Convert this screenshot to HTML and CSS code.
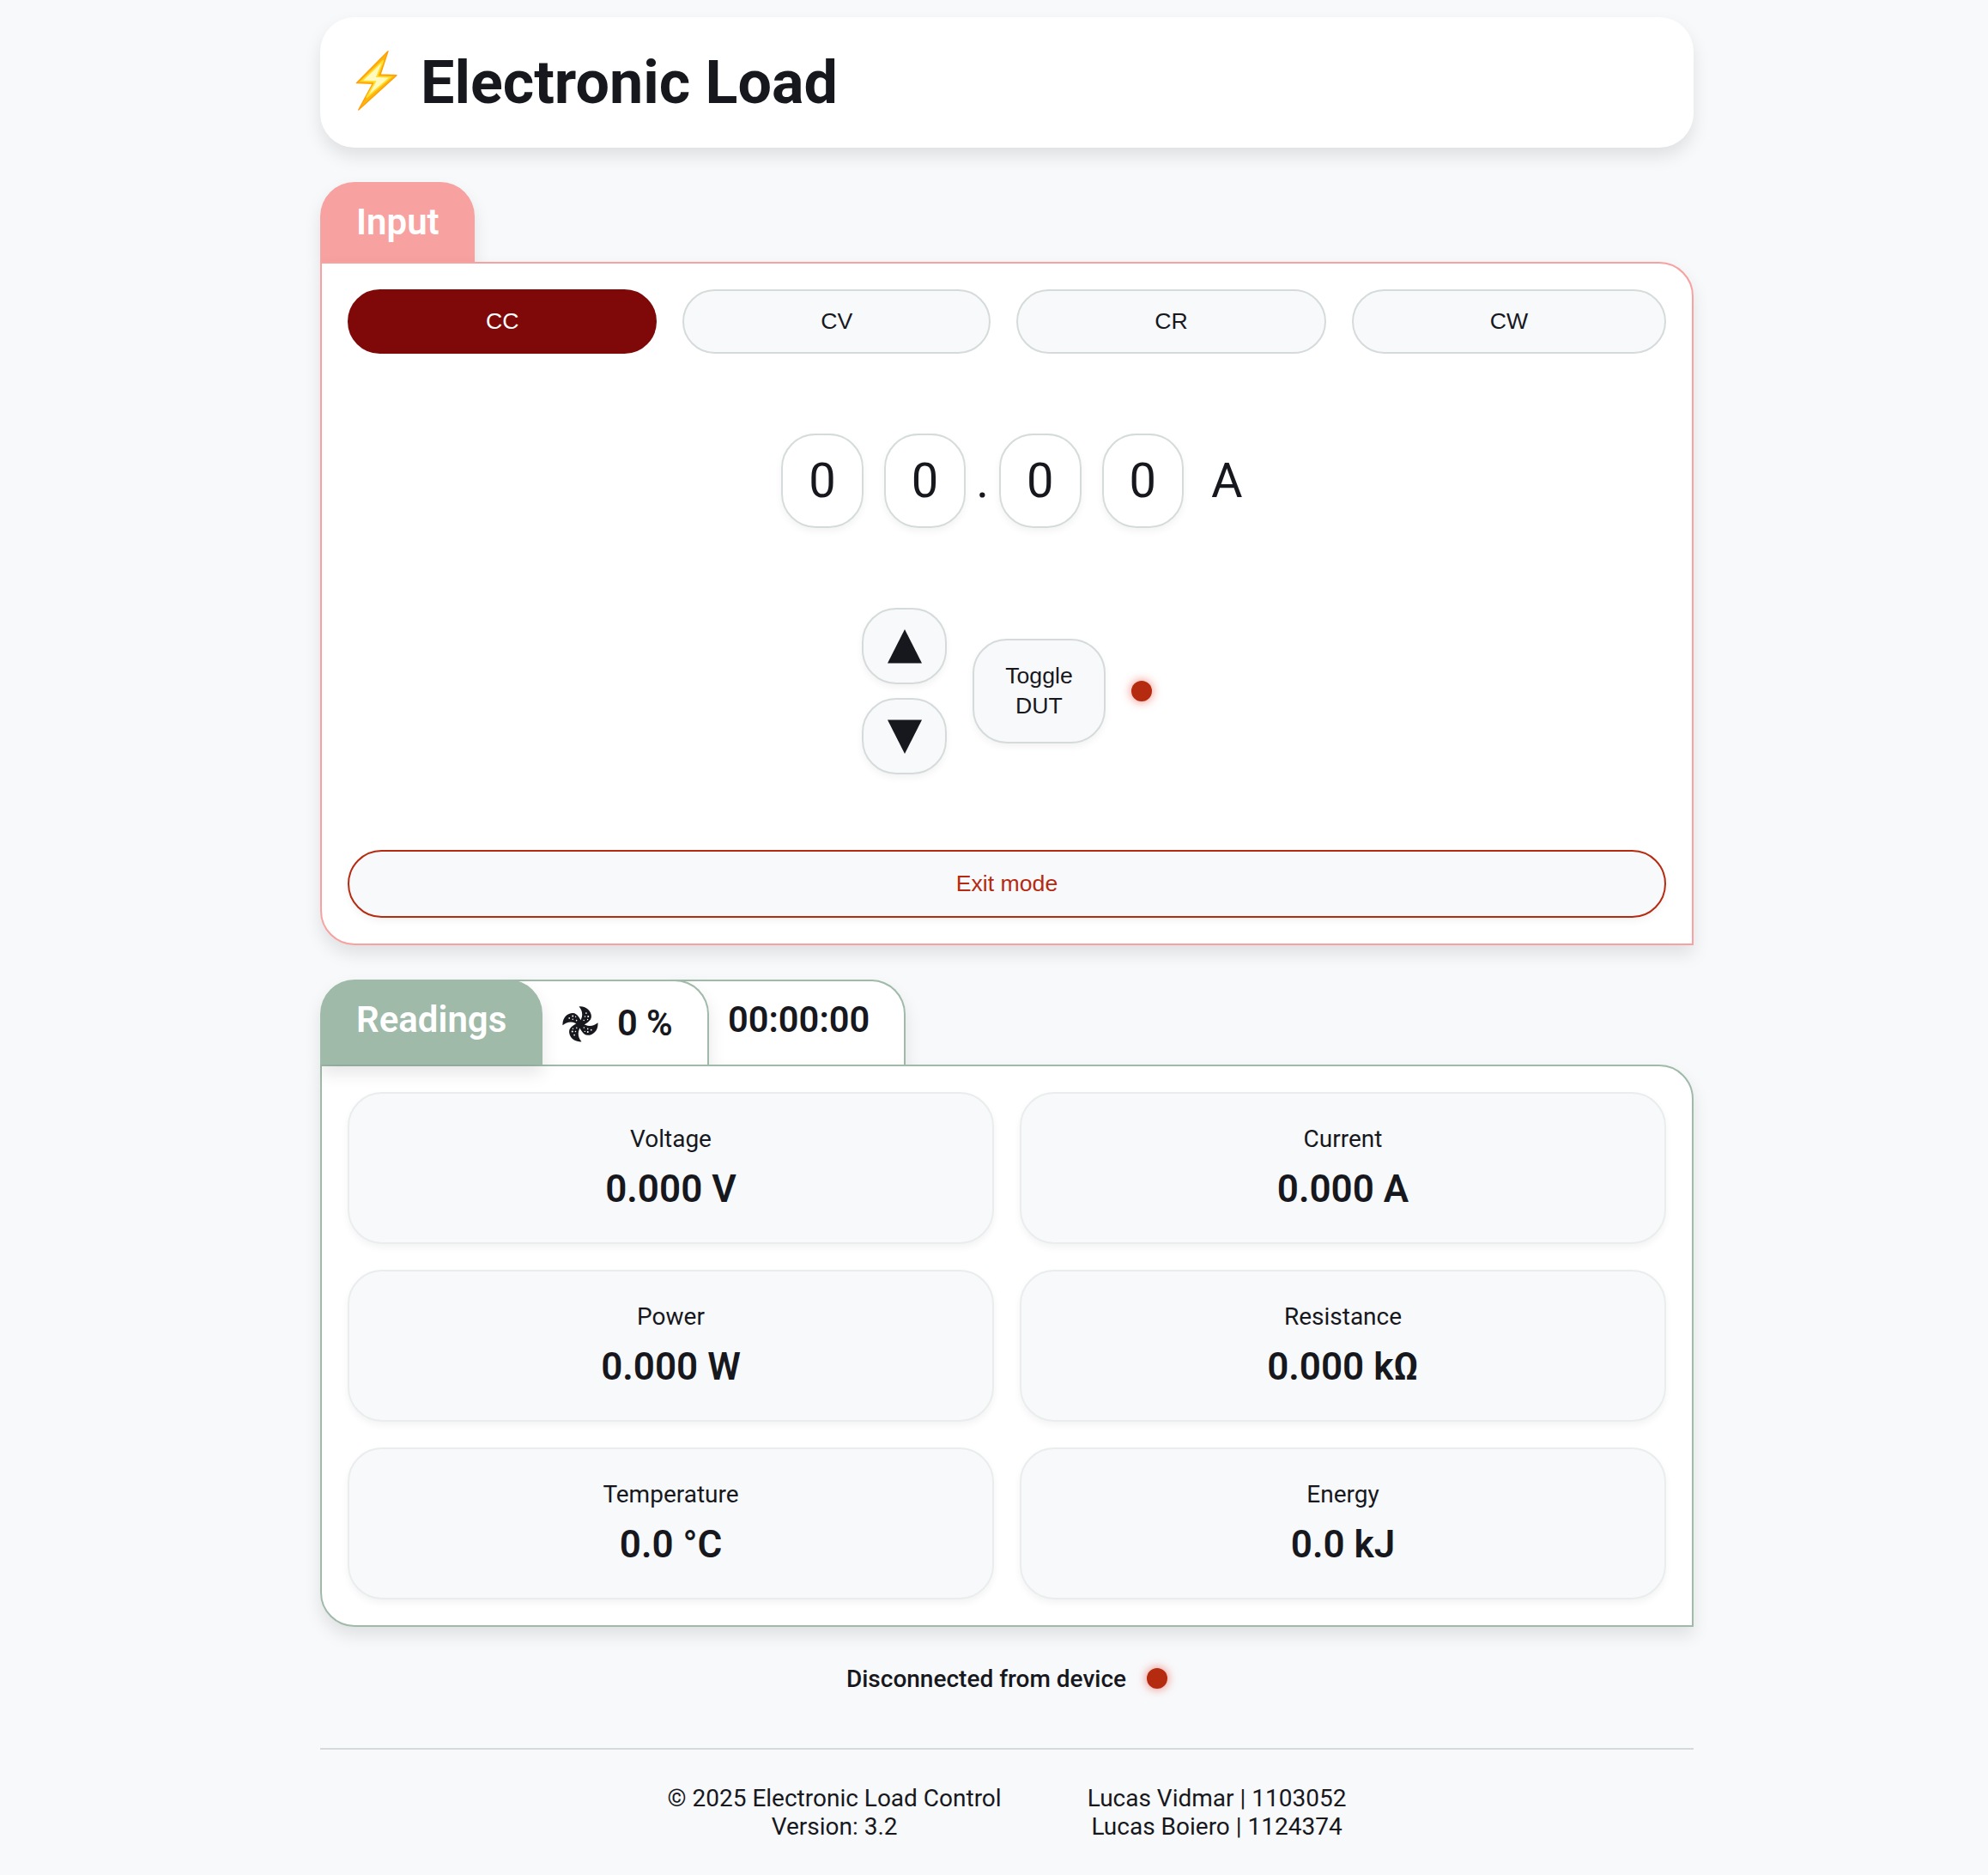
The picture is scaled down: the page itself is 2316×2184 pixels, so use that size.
FILE: index.html
```html
<!DOCTYPE html>
<html lang="en">
<head>
<meta charset="utf-8">
<title>Electronic Load</title>
<link rel="stylesheet" href="styles.css">
</head>
<body>
<div class="container">
  <header class="header">
    <svg class="bolt" viewBox="0 0 150 215" aria-hidden="true">
      <path d="M117-1 7 110 64 112 14 204 147 83 90 81Z" fill="#ffb60c" stroke="#ff9f05" stroke-width="4" stroke-linejoin="round"/>
      <path d="M101 31 25 103 73 105 42 161 126 90 78 88Z" fill="#fffac0" stroke="#ffe02e" stroke-width="5"/>
    </svg>
    <h1>Electronic Load</h1>
  </header>

  <section class="section input-section">
    <div class="tabs"><h2 class="tab tab-title">Input</h2></div>
    <div class="panel">
      <div class="modes">
        <button class="mode active">CC</button>
        <button class="mode">CV</button>
        <button class="mode">CR</button>
        <button class="mode">CW</button>
      </div>
      <div class="digits">
        <span class="digit">0</span><span class="digit">0</span><span class="point">.</span><span class="digit">0</span><span class="digit">0</span><span class="unit">A</span>
      </div>
      <div class="controls">
        <div class="arrows">
          <button class="arrow" aria-label="Increase"><svg viewBox="0 0 40 40"><path d="M20 0 40 39.5H0Z"/></svg></button>
          <button class="arrow" aria-label="Decrease"><svg viewBox="0 0 40 40"><path d="M0 .5H40L20 40Z"/></svg></button>
        </div>
        <button class="toggle">Toggle<br>DUT</button>
        <span class="led"></span>
      </div>
      <button class="exit">Exit mode</button>
    </div>
  </section>

  <section class="section readings-section">
    <div class="tabs">
      <h2 class="tab tab-title">Readings</h2>
      <div class="tab tab-fan">
        <svg class="fan" viewBox="0 0 125 125" aria-hidden="true">
          <defs>
            <g id="blade">
              <path d="M58 1C84-1 101 17 101 36 100 53 84 58 66 71L54 60C74 42 73 18 58 1Z"/>
              <g class="holes"><circle cx="83" cy="24" r="2.6"/><circle cx="79" cy="36" r="2.3"/><circle cx="90" cy="36" r="3"/><circle cx="75" cy="49" r="2.3"/><circle cx="88" cy="46" r="2"/></g>
            </g>
          </defs>
          <use href="#blade"/>
          <use href="#blade" transform="rotate(90 62.5 62)"/>
          <use href="#blade" transform="rotate(180 62.5 62)"/>
          <use href="#blade" transform="rotate(270 62.5 62)"/>
        </svg>
        <span>0 %</span>
      </div>
      <div class="tab tab-time">00:00:00</div>
    </div>
    <div class="panel readings">
      <div class="card"><span class="label">Voltage</span><span class="value">0.000 V</span></div>
      <div class="card"><span class="label">Current</span><span class="value">0.000 A</span></div>
      <div class="card"><span class="label">Power</span><span class="value">0.000 W</span></div>
      <div class="card"><span class="label">Resistance</span><span class="value">0.000 kΩ</span></div>
      <div class="card"><span class="label">Temperature</span><span class="value">0.0 °C</span></div>
      <div class="card"><span class="label">Energy</span><span class="value">0.0 kJ</span></div>
    </div>
  </section>

  <div class="status"><span>Disconnected from device</span><span class="led"></span></div>

  <footer class="footer">
    <p>© 2025 Electronic Load Control<br>Version: 3.2</p>
    <p>Lucas Vidmar | 1103052<br>Lucas Boiero | 1124374</p>
  </footer>
</div>
</body>
</html>
```
FILE: styles.css
```css
:root {
  --bg: #f8f9fb;
  --text: #17181e;
  --line: #d5dbdb;
  --red: #b52b10;
  --pink: #f7a1a0;
  --green: #a0baaa;
  --shadow: 0 10px 20px rgba(0, 0, 0, .1);
  --shadow-small: 0 4px 8px rgba(0, 0, 0, .05);
  --radius: 40px;
}

* { box-sizing: border-box; }

body {
  margin: 0;
  padding: 20px 0 0 30px;
  background: var(--bg);
  color: var(--text);
  font: 28px Roboto, sans-serif;
}

h1, h2, p { margin: 0; }

button {
  padding: 0;
  border: 2px solid var(--line);
  border-radius: var(--radius);
  background: var(--bg);
  color: var(--text);
  font: 26.667px "Liberation Sans", Arial, sans-serif;
}

.container {
  width: 1600px;
  margin: 0 auto;
}

.header {
  display: flex;
  align-items: center;
  height: 152px;
  padding-left: 40px;
  border-radius: var(--radius);
  background: #fff;
  box-shadow: var(--shadow);
}

.bolt { width: 50px; height: 71.67px; margin-right: 27px; overflow: visible; }

h1 { font-size: 70px; font-weight: 700; line-height: 82px; }

.section { margin-top: 40px; }

.tabs { display: flex; }

.tab {
  padding-top: 22px;
  font-size: 41.6px;
  font-weight: 600;
  line-height: 49px;
  border-radius: var(--radius) var(--radius) 0 0;
  box-shadow: var(--shadow);
}

.tab-title { font-size: 42px; }

.input-section .tabs { height: 93px; }
.input-section .tab-title { width: 180px; padding-left: 42px; background: var(--pink); color: #fff; }

.panel {
  position: relative;
  padding: 30px;
  border: 2px solid var(--pink);
  border-radius: 0 var(--radius) 0 var(--radius);
  background: #fff;
  box-shadow: var(--shadow);
}

.input-section .panel { height: 796px; }

.modes { display: flex; gap: 30px; height: 75px; }
.mode { flex: 1 1 auto; }
.mode.active { background: #7f0909; border-color: #7f0909; color: #fff; }

.digits {
  display: flex;
  justify-content: center;
  align-items: center;
  height: 110px;
  margin-top: 93px;
  font-size: 56px;
}

.digit {
  display: flex;
  align-items: center;
  justify-content: center;
  width: 95.5px;
  height: 110px;
  margin: 0 12px;
  border: 2px solid var(--line);
  border-radius: var(--radius);
  box-shadow: var(--shadow-small);
}

.unit { margin-left: 20px; }

.controls {
  display: flex;
  justify-content: center;
  align-items: center;
  gap: 30px;
  height: 194px;
  margin-top: 93px;
}

.arrows { display: flex; flex-direction: column; gap: 16px; }

.arrow {
  display: flex;
  align-items: center;
  justify-content: center;
  width: 99px;
  height: 89px;
  box-shadow: var(--shadow-small);
}

.arrow svg { width: 40px; height: 40px; fill: var(--text); }

.toggle { width: 155px; height: 122px; line-height: 35px; box-shadow: var(--shadow-small); }

.led {
  width: 24px;
  height: 24px;
  border-radius: 50%;
  background: var(--red);
  box-shadow: 0 0 12px rgba(230, 40, 20, .6);
}

.exit {
  display: block;
  width: 100%;
  height: 79px;
  margin-top: 88px;
  border-color: var(--red);
  color: var(--red);
  box-shadow: var(--shadow-small);
}

.readings-section .tabs { height: 99px; }
.readings-section .tab-title { position: relative; z-index: 3; width: 259px; padding-left: 42px; background: var(--green); color: #fff; }

.tab-fan, .tab-time {
  display: flex;
  border: 2px solid var(--green);
  border-bottom: 0;
  border-top-left-radius: 0;
  margin-left: -40px;
  padding-top: 20px;
  background: #fff;
}

.tab-fan { position: relative; width: 234px; padding-left: 61px; padding-top: 24px; z-index: 1; }
.tab-time { width: 269px; padding-left: 60px; }
.fan { width: 42px; height: 42px; margin: 5px 22px 0 0; fill: var(--text); }
.holes { fill: #fff; }

.readings {
  z-index: 2;
  display: grid;
  grid-template-columns: 1fr 1fr;
  grid-auto-rows: 177px;
  gap: 30px;
  border-color: var(--green);
}

.card {
  display: flex;
  flex-direction: column;
  align-items: center;
  padding-top: 36px;
  border: 2px solid #e9eded;
  border-radius: var(--radius);
  background: var(--bg);
  box-shadow: var(--shadow-small);
}

.label { line-height: 33px; }
.value { margin-top: 16px; font-size: 44px; font-weight: 600; line-height: 52px; }

.status {
  display: flex;
  justify-content: center;
  align-items: center;
  gap: 24px;
  height: 34px;
  margin-top: 43px;
  font-weight: 500;
}

.footer {
  display: flex;
  justify-content: center;
  gap: 100px;
  height: 148px;
  margin-top: 64px;
  padding-top: 40px;
  border-top: 2px solid var(--line);
  line-height: 33px;
  text-align: center;
}
```
